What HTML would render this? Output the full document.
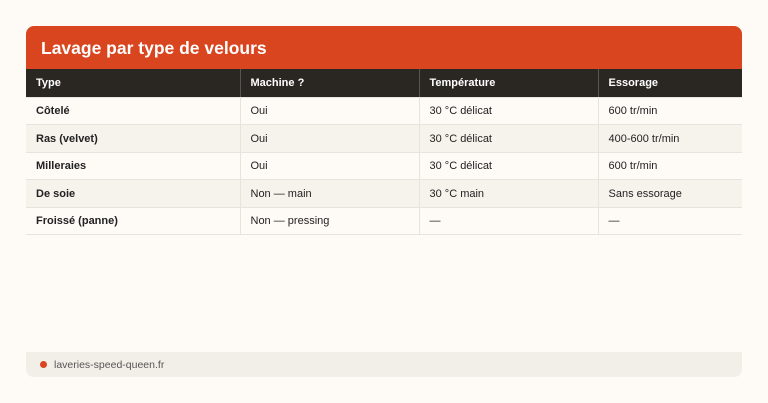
<!DOCTYPE html><html><head><style>
body{margin:0;width:768px;height:403px;background:#fefbf7;font-family:"Liberation Sans",sans-serif;position:relative}
.h{position:absolute;left:26px;top:26px;width:716px;height:43px;background:#d8451f;border-radius:8px 8px 0 0;color:#fff;font-weight:bold;font-size:17.5px;line-height:44px;box-sizing:border-box;padding-left:15px}
table{position:absolute;left:26px;top:69px;width:716px;border-collapse:collapse;font-size:11px;color:#222}
td,th{height:27.5px;padding:1px 0 0 10px;text-align:left;box-sizing:border-box;border-bottom:1px solid #e8e4dc;border-right:1px solid #e8e4dc}
td:last-child,th:last-child{border-right:none}
th{background:#2a2723;color:#fff;font-weight:bold;height:28px;border-right:1px solid #555}
tr:nth-child(odd) td{background:#f6f3ec}
td:first-child{font-weight:bold}
.f{position:absolute;left:26px;top:352px;width:716px;height:25px;background:#f2efe8;border-radius:0 0 8px 8px;font-size:10.5px;color:#555;line-height:26px;box-sizing:border-box;padding-left:28px}
.f:before{content:"";position:absolute;left:14px;top:9px;width:7px;height:7px;border-radius:50%;background:#d8451f}
</style></head><body>
<div class="h">Lavage par type de velours</div>
<table>
<tr><th style="width:214px">Type</th><th style="width:179px">Machine ?</th><th style="width:179px">Température</th><th>Essorage</th></tr>
<tr><td>Côtelé</td><td>Oui</td><td>30 °C délicat</td><td>600 tr/min</td></tr>
<tr><td>Ras (velvet)</td><td>Oui</td><td>30 °C délicat</td><td>400-600 tr/min</td></tr>
<tr><td>Milleraies</td><td>Oui</td><td>30 °C délicat</td><td>600 tr/min</td></tr>
<tr><td>De soie</td><td>Non — main</td><td>30 °C main</td><td>Sans essorage</td></tr>
<tr><td>Froissé (panne)</td><td>Non — pressing</td><td>—</td><td>—</td></tr>
</table>
<div class="f">laveries-speed-queen.fr</div>
</body></html>
